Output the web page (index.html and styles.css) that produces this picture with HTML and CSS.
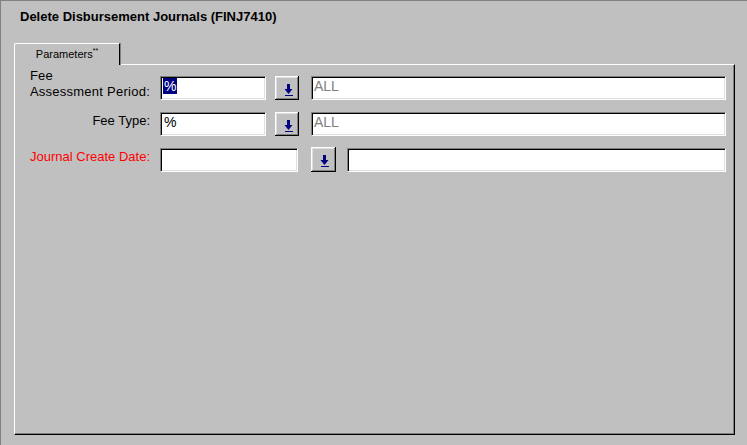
FILE: index.html
```html
<!DOCTYPE html>
<html>
<head>
<meta charset="utf-8">
<link rel="stylesheet" href="styles.css">
</head>
<body>
<div class="window">
  <h1 class="title">Delete Disbursement Journals (FINJ7410)</h1>
  <div class="tabs">
    <div class="tabstrip">
      <div class="tab">Parameters<sup>**</sup></div>
    </div>
    <div class="panel">
      <div class="row row-1">
        <div class="lbl"><span class="wide">Fee<br>Assessment Period:</span></div>
        <div class="field code"><span class="sel">%</span></div>
        <button class="btn" type="button"><svg width="24" height="24" viewBox="0 0 24 24"><rect x="12" y="8" width="3" height="5" fill="#000080"/><polygon points="9.5,13 17.5,13 13.5,18" fill="#000080"/><rect x="10" y="19" width="8" height="1" fill="#000080"/></svg></button>
        <div class="field desc ph">ALL</div>
      </div>
      <div class="row row-2">
        <div class="lbl"><span>Fee Type:</span></div>
        <div class="field code">%</div>
        <button class="btn" type="button"><svg width="24" height="24" viewBox="0 0 24 24"><rect x="12" y="8" width="3" height="5" fill="#000080"/><polygon points="9.5,13 17.5,13 13.5,18" fill="#000080"/><rect x="10" y="19" width="8" height="1" fill="#000080"/></svg></button>
        <div class="field desc ph">ALL</div>
      </div>
      <div class="row row-3">
        <div class="lbl req"><span>Journal Create Date:</span></div>
        <div class="field date"></div>
        <button class="btn" type="button"><svg width="25" height="25" viewBox="0 0 25 25"><rect x="12" y="8" width="3" height="5" fill="#000080"/><polygon points="9.5,13 17.5,13 13.5,18" fill="#000080"/><rect x="10" y="19" width="8" height="1" fill="#000080"/></svg></button>
        <div class="field desc"></div>
      </div>
    </div>
  </div>
</div>
</body>
</html>
```

FILE: styles.css
```css
html, body {
  margin: 0;
  padding: 0;
}
body {
  background: #c0c0c0;
  font-family: "Liberation Sans", Arial, sans-serif;
  font-size: 13px;
  color: #000;
}
.window {
  width: 747px;
  height: 445px;
  box-sizing: border-box;
  border-top: 1px solid #808080;
  border-left: 1px solid #808080;
  padding: 8px 12px 10px 13px;
  display: flex;
  flex-direction: column;
}
.title {
  margin: 0 0 0 6px;
  font-size: 13px;
  font-weight: bold;
  line-height: 15px;
  height: 15px;
}
.tabs {
  margin-top: 19px;
  flex: 1;
  display: flex;
  flex-direction: column;
}
.tabstrip {
  display: flex;
  height: 22px;
  margin-bottom: -1px;
  position: relative;
  z-index: 1;
}
.tab {
  width: 106px;
  box-sizing: border-box;
  height: 22px;
  background: #c0c0c0;
  border-top: 1px solid #fff;
  border-left: 1px solid #fff;
  border-right: 1px solid #000;
  border-top-left-radius: 2px;
  box-shadow: 1px 0 0 #808080;
  font-size: 11px;
  line-height: 13px;
  padding-top: 4px;
  text-align: center;
}
.tab sup {
  font-size: 7px;
  vertical-align: top;
  line-height: 7px;
  position: relative;
  top: -1px;
}
.panel {
  flex: 1;
  border-top: 1px solid #fff;
  border-left: 1px solid #fff;
  border-right: 1px solid #000;
  border-bottom: 1px solid #000;
  box-shadow: inset -1px -1px 0 #808080;
  padding: 3px 8px 0 0;
}
.row {
  display: flex;
  align-items: flex-start;
}
.row + .row {
  margin-top: 12px;
}
.lbl {
  width: 135px;
  margin-right: 10px;
  text-align: right;
  line-height: 16px;
  padding-top: 1px;
}
.lbl span {
  display: inline-block;
  text-align: left;
}
.lbl .wide {
  letter-spacing: 0.25px;
}
.row-1 {
  align-items: flex-end;
}
.row-1 .lbl {
  padding-top: 0;
}
.req {
  color: #ff0000;
}
.field {
  height: 24px;
  box-sizing: border-box;
  background: #fff;
  border: 1px solid;
  border-color: #808080 #fff #fff #808080;
  box-shadow: inset 1px 1px 0 #000, inset -1px -1px 0 #dfdfdf;
  font-size: 14px;
  line-height: 16px;
  padding: 1px 2px 0 2px;
}
.code {
  width: 106px;
}
.date {
  width: 138px;
}
.sel {
  display: inline-block;
  background: #000080;
  color: #fff;
  padding: 0 1px;
}
.row-2 .code {
  padding-left: 3px;
}
.desc {
  flex: 1;
  margin-left: 12px;
}
.ph {
  color: #808080;
}
.btn {
  width: 24px;
  height: 24px;
  margin: 0 0 0 9px;
  padding: 0;
  box-sizing: border-box;
  background: #c0c0c0;
  border: none;
  box-shadow: inset -1px -1px 0 #000, inset 1px 1px 0 #fff, inset -2px -2px 0 #808080, inset 2px 2px 0 #dfdfdf;
  display: block;
}
.btn svg {
  display: block;
}
.row-3 .btn {
  width: 25px;
  height: 25px;
  margin-left: 13px;
  margin-top: -1px;
}
.row-3 .desc {
  margin-left: 11px;
}
```
